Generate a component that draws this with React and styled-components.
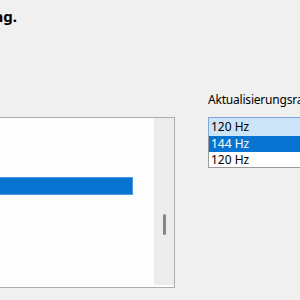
import React from 'react';
import styled, { createGlobalStyle } from 'styled-components';

const GlobalStyle = createGlobalStyle`
  html, body {
    margin: 0;
    padding: 0;
    background: #f0f0f0;
    font-family: "Noto Sans", "Liberation Sans", sans-serif;
  }
`;

const Page = styled.div`
  width: 300px;
  height: 300px;
  overflow: hidden;
  background: #f0f0f0;
`;

const HeadingClip = styled.div`
  display: flex;
  justify-content: flex-end;
  width: 17px;
  overflow: hidden;
  margin-top: 6px;
`;

const Heading = styled.h2`
  margin: 0;
  font-size: 15px;
  line-height: 21px;
  font-weight: 700;
  color: #000;
  white-space: nowrap;
`;

const MainRow = styled.div`
  display: flex;
  align-items: flex-start;
  gap: 33px;
  margin-top: 65px;
`;

const LeftColumn = styled.div`
  padding-top: 25px;
`;

const ListBox = styled.div`
  display: flex;
  width: 174px;
  height: 169px;
  background: #fdfdfd;
  border: 1px solid #adadad;
  border-left: none;
`;

const Items = styled.div`
  flex: 1;
  padding-top: 59px;
`;

const SelectedBar = styled.div`
  width: 132px;
  height: 16px;
  background: #0874d1;
  border: 1px solid #4c9be2;
  border-left: none;
`;

const ScrollTrack = styled.div`
  display: flex;
  justify-content: center;
  width: 20px;
  height: 167px;
  background: #ececec;
`;

const ScrollThumb = styled.div`
  width: 3px;
  height: 21px;
  margin-top: 96px;
  border-radius: 2px;
  background: #868686;
`;

const RightColumn = styled.div`
  display: flex;
  flex-direction: column;
`;

const Label = styled.div`
  font-size: 12px;
  line-height: 16px;
  letter-spacing: -0.2px;
  color: #000;
  white-space: nowrap;
  margin-bottom: 9px;
`;

const Combo = styled.div`
  width: 110px;
`;

const ComboValue = styled.div`
  height: 18px;
  line-height: 18px;
  padding-left: 2px;
  font-size: 12px;
  color: #000;
  background: #cce4f7;
  border: 1px solid #7ea8d6;
  border-bottom: none;
`;

const Options = styled.div`
  border: 1px solid #9a9a9a;
  border-top: none;
  background: #fff;
`;

const Option = styled.div`
  height: ${(p) => (p.$active ? 16 : 15)}px;
  line-height: ${(p) => (p.$active ? 16 : 15)}px;
  padding-left: 2px;
  font-size: 12px;
  color: ${(p) => (p.$active ? '#fff' : '#000')};
  background: ${(p) => (p.$active ? '#0874d1' : '#fff')};
`;

const rates = [
  { label: '144 Hz', active: true },
  { label: '120 Hz', active: false },
];

const App = () => {
  return (
    <Page>
      <GlobalStyle />
      <HeadingClip>
        <Heading>Erweiterte Anzeigeeinstellung.</Heading>
      </HeadingClip>
      <MainRow>
        <LeftColumn>
          <ListBox>
            <Items>
              <SelectedBar />
            </Items>
            <ScrollTrack>
              <ScrollThumb />
            </ScrollTrack>
          </ListBox>
        </LeftColumn>
        <RightColumn>
          <Label>Aktualisierungsrate</Label>
          <Combo>
            <ComboValue>120 Hz</ComboValue>
            <Options>
              {rates.map((rate, idx) => (
                <Option key={idx} $active={rate.active}>
                  {rate.label}
                </Option>
              ))}
            </Options>
          </Combo>
        </RightColumn>
      </MainRow>
    </Page>
  );
};

export default App;
